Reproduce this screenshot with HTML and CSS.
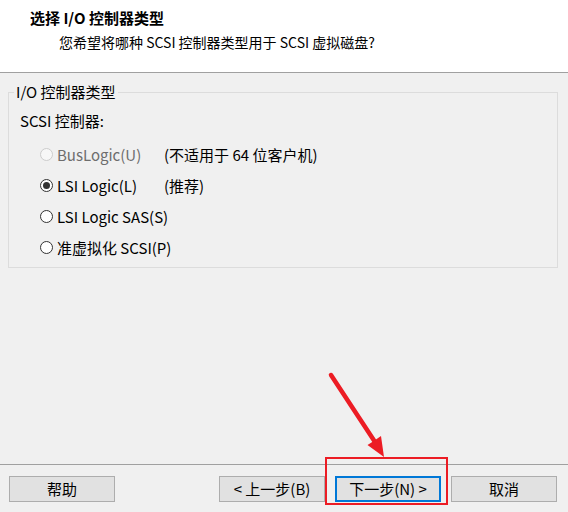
FILE: index.html
```html
<!DOCTYPE html>
<html lang="zh">
<head>
<meta charset="utf-8">
<title>选择 I/O 控制器类型</title>
<link rel="stylesheet" href="styles.css">
</head>
<body>
<div class="window">
  <header class="header">
    <div class="title">选择 I/O 控制器类型</div>
    <div class="subtitle">您希望将哪种 SCSI 控制器类型用于 SCSI 虚拟磁盘?</div>
  </header>
  <main class="main">
    <fieldset class="group">
      <legend class="legend">I/O 控制器类型</legend>
      <div class="group-label">SCSI 控制器:</div>
      <div class="options">
        <div class="option disabled"><span class="radio"></span><span>BusLogic(U)</span></div>
        <div class="note">(不适用于 64 位客户机)</div>
        <div class="option"><span class="radio checked"></span><span>LSI Logic(L)</span></div>
        <div class="note">(推荐)</div>
        <div class="option"><span class="radio"></span><span>LSI Logic SAS(S)</span></div>
        <div class="note"></div>
        <div class="option"><span class="radio"></span><span>准虚拟化 SCSI(P)</span></div>
        <div class="note"></div>
      </div>
    </fieldset>
  </main>
  <footer class="footer">
    <button class="btn">帮助</button>
    <div class="spacer"></div>
    <button class="btn">&lt; 上一步(B)</button>
    <button class="btn default">下一步(N) &gt;</button>
    <button class="btn">取消</button>
  </footer>
  <div class="highlight-box"></div>
  <svg class="arrow" width="568" height="512" viewBox="0 0 568 512">
    <line x1="331" y1="375" x2="375" y2="442" stroke="#ec1c24" stroke-width="4.5" stroke-linecap="round"/>
    <polygon points="384,457 367.5,445 373,441.5 381,436" fill="#ec1c24"/>
  </svg>
</div>
</body>
</html>
```
FILE: styles.css
```css
* { box-sizing: border-box; }
html, body { margin: 0; padding: 0; }
body {
  background: #f0f0f0;
  font-family: "Noto Sans CJK SC", sans-serif;
  color: #000;
}
.window {
  position: relative;
  width: 568px;
  height: 512px;
  display: flex;
  flex-direction: column;
  background: #f0f0f0;
  overflow: hidden;
}
.header {
  height: 73px;
  background: #fff;
  border-bottom: 1px solid #a0a0a0;
  padding: 8px 0 0 30px;
}
.title {
  font-size: 15px;
  font-weight: bold;
  line-height: 20px;
}
.subtitle {
  font-size: 14px;
  line-height: 20px;
  margin: 4px 0 0 29px;
}
.main {
  flex: 1;
  padding: 0 10px 0 8px;
}
.group {
  margin: 10px 0 0 0;
  padding: 0 0 4px 0;
  border: 1px solid #dcdcdc;
  min-width: 0;
}
.legend {
  font-size: 15px;
  line-height: 18px;
  margin-left: 5px;
  padding: 0 2px;
}
.group-label {
  font-size: 15px;
  line-height: 18px;
  margin: 11px 0 0 11px;
}
.options {
  display: grid;
  grid-template-columns: 124px 1fr;
  grid-auto-rows: 31px;
  margin: 9px 0 0 31px;
  font-size: 15px;
}
.option, .note {
  display: flex;
  align-items: center;
  line-height: 18px;
  white-space: nowrap;
}
.radio {
  width: 13px;
  height: 13px;
  border: 1px solid #333;
  border-radius: 50%;
  background: #fff;
  margin-right: 4px;
  display: flex;
  align-items: center;
  justify-content: center;
  flex: none;
}
.radio.checked::after {
  content: "";
  width: 7px;
  height: 7px;
  border-radius: 50%;
  background: #333;
}
.option.disabled { color: #6d6d6d; }
.option.disabled .radio {
  border-color: #cccccc;
  background: #f7f7f7;
}
.footer {
  height: 48px;
  border-top: 1px solid #a0a0a0;
  display: flex;
  align-items: flex-start;
  padding: 11px 11px 0 9px;
  gap: 10px;
}
.spacer { flex: 1; }
.btn {
  width: 106px;
  height: 26px;
  background: #e1e1e1;
  border: 1px solid #adadad;
  font-family: "Noto Sans CJK SC", sans-serif;
  font-size: 15px;
  line-height: 18px;
  color: #000;
  padding: 0;
  margin: 0;
  white-space: nowrap;
}
.btn.default {
  border: 2px solid #0078d7;
}
.highlight-box {
  position: absolute;
  left: 325px;
  top: 457px;
  width: 123px;
  height: 48px;
  border: 2px solid #ec1c24;
  pointer-events: none;
}
.arrow {
  position: absolute;
  left: 0;
  top: 0;
  pointer-events: none;
}
```
